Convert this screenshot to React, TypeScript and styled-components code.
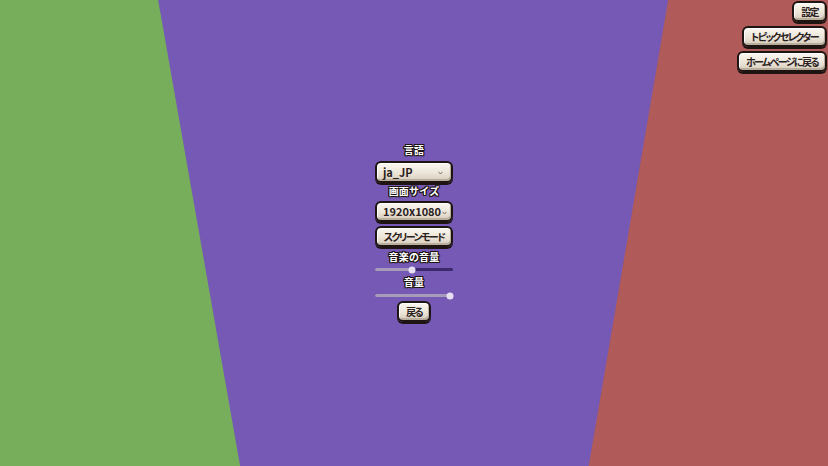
import React, { useState } from "react";
import styled, { createGlobalStyle } from "styled-components";

const GlobalStyle = createGlobalStyle`
  html, body {
    margin: 0;
    padding: 0;
    width: 100%;
    height: 100%;
    overflow: hidden;
  }
  body {
    font-family: "Noto Sans CJK JP", "Noto Sans", sans-serif;
  }
  #root {
    width: 100%;
    height: 100%;
  }
`;

const Stage = styled.div`
  position: relative;
  width: 100vw;
  height: 100vh;
  background: #7559b4;
  overflow: hidden;
  display: flex;
  align-items: center;
  justify-content: center;

  &::before,
  &::after {
    content: "";
    position: absolute;
    inset: 0;
    pointer-events: none;
  }
  &::before {
    background: #77ae5c;
    clip-path: polygon(0 0, 19.1% 0, 29% 100%, 0 100%);
  }
  &::after {
    background: #b05a59;
    clip-path: polygon(80.7% 0, 100% 0, 100% 100%, 71.1% 100%);
  }
`;

const TopRight = styled.nav`
  position: absolute;
  top: 1px;
  right: 1px;
  z-index: 2;
  display: flex;
  flex-direction: column;
  align-items: flex-end;
  gap: 4px;
`;

const Menu = styled.div`
  position: relative;
  z-index: 1;
  display: flex;
  flex-direction: column;
  align-items: center;
  padding-bottom: 1px;
`;

const Label = styled.div<{ $top?: number; $gap?: number }>`
  font-size: 10px;
  font-weight: 700;
  line-height: 13px;
  color: #ffffff;
  letter-spacing: 0.2px;
  text-shadow:
    -1px -1px 0 #1d1412, 1px -1px 0 #1d1412, -1px 1px 0 #1d1412,
    1px 1px 0 #1d1412, 0 1px 0 #1d1412, 0 -1px 0 #1d1412,
    1px 0 0 #1d1412, -1px 0 0 #1d1412;
  margin-top: ${(p) => p.$top ?? 0}px;
  margin-bottom: ${(p) => p.$gap ?? 3}px;
`;

const Plate = styled.button<{ $width?: number; $top?: number; $height?: number }>`
  box-sizing: border-box;
  height: ${(p) => p.$height ?? 21}px;
  ${(p) => (p.$width ? `width: ${p.$width}px;` : "")}
  margin-top: ${(p) => p.$top ?? 0}px;
  padding: 0 7px;
  display: flex;
  align-items: center;
  justify-content: center;
  border: 2px solid #1e1513;
  border-radius: 6px;
  background: linear-gradient(180deg, #fbf8f1 0%, #ece5d8 55%, #d6ccbc 100%);
  box-shadow:
    inset 1px 1px 0 #ffffff,
    inset -1px -2px 0 #b9ad9c,
    0 2px 0 #1e1513;
  color: #2a201d;
  font-family: "Noto Sans CJK JP", "Noto Sans", sans-serif;
  font-size: 10px;
  font-weight: 700;
  font-feature-settings: "palt";
  letter-spacing: -1.6px;
  line-height: 1;
  cursor: pointer;
  white-space: nowrap;
`;

const SelectPlate = styled(Plate)`
  justify-content: space-between;
  padding: 0 8px 0 6px;
  font-size: 11px;
  letter-spacing: 0;
  font-feature-settings: normal;
`;

const Chevron = styled.svg`
  flex: none;
  width: 5px;
  height: 4px;
  margin-left: 1px;
  margin-top: 2px;
`;

const Track = styled.div<{ $after: number }>`
  position: relative;
  width: 78px;
  height: 3px;
  border-radius: 2px;
  background: #3c2a6c;
  margin: 2px 0 ${(p) => p.$after}px;
`;

const Fill = styled.div`
  height: 100%;
  border-radius: 2px;
  background: #a69cba;
`;

const Thumb = styled.div`
  position: absolute;
  top: 50%;
  width: 7px;
  height: 7px;
  border-radius: 50%;
  background: #e6e0f2;
  transform: translate(-50%, -50%);
`;

function Slider({ value, after }: { value: number; after: number }) {
  return (
    <Track $after={after}>
      <Fill style={{ width: `${value * 100}%` }} />
      <Thumb style={{ left: `${value * 100}%` }} />
    </Track>
  );
}

function Select({ value, height }: { value: string; height: number }) {
  return (
    <SelectPlate $width={78} $height={height}>
      <span>{value}</span>
      <Chevron viewBox="0 0 5 4">
        <path d="M0.5 0.8 L2.5 3 L4.5 0.8" fill="none" stroke="#7a716b" strokeWidth="1" />
      </Chevron>
    </SelectPlate>
  );
}

export default function App() {
  const [lang] = useState("ja_JP");
  const [size] = useState("1920x1080");
  return (
    <>
      <GlobalStyle />
      <Stage>
        <TopRight>
          <Plate>設定</Plate>
          <Plate>トピックセレクター</Plate>
          <Plate>ホームページに戻る</Plate>
        </TopRight>
        <Menu>
          <Label $gap={5}>言語</Label>
          <Select value={lang} height={22} />
          <Label $top={1} $gap={4}>画面サイズ</Label>
          <Select value={size} height={21} />
          <Plate $width={78} $top={4}>スクリーンモード</Plate>
          <Label $top={3}>音楽の音量</Label>
          <Slider value={0.48} after={4} />
          <Label $gap={4}>音量</Label>
          <Slider value={0.96} after={4} />
          <Plate>戻る</Plate>
        </Menu>
      </Stage>
    </>
  );
}
